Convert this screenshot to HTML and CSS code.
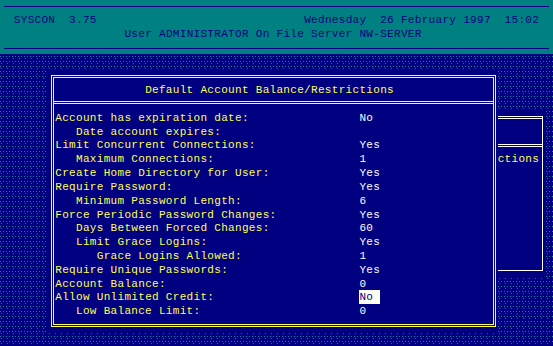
FILE: index.html
```
<!DOCTYPE html>
<html lang="en">
<head>
<meta charset="utf-8">
<title>SYSCON 3.75</title>
<link rel="stylesheet" href="styles.css">
</head>
<body>
<div class="screen">
  <header class="header">
    <div class="hrow"><div class="hrule hrule-top"></div></div>
    <div class="hrow hrow-split"><span class="t">SYSCON  3.75</span><span class="t">Wednesday  26 February 1997  15:02</span></div>
    <div class="hrow hrow-user"><span class="t">User ADMINISTRATOR On File Server NW-SERVER</span></div>
    <div class="hrow"><div class="hrule hrule-bottom"></div></div>
  </header>

  <div class="shade"></div>

  <div class="win">
    <div class="win-frame">
      <div class="win-title"></div>
      <div class="win-body">
        <div class="win-item t">Account Restrictions</div>
      </div>
    </div>
  </div>

  <section class="dialog">
    <div class="frame">
      <div class="title"><span class="t">Default Account Balance/Restrictions</span></div>
      <div class="body">
        <div class="row"><span class="label t">Account has expiration date:</span><span class="value t">No</span></div>
        <div class="row"><span class="label t i1">Date account expires:</span><span class="value t"></span></div>
        <div class="row"><span class="label t">Limit Concurrent Connections:</span><span class="value t">Yes</span></div>
        <div class="row"><span class="label t i1">Maximum Connections:</span><span class="value t">1</span></div>
        <div class="row"><span class="label t">Create Home Directory for User:</span><span class="value t">Yes</span></div>
        <div class="row"><span class="label t">Require Password:</span><span class="value t">Yes</span></div>
        <div class="row"><span class="label t i1">Minimum Password Length:</span><span class="value t">6</span></div>
        <div class="row"><span class="label t">Force Periodic Password Changes:</span><span class="value t">Yes</span></div>
        <div class="row"><span class="label t i1">Days Between Forced Changes:</span><span class="value t">60</span></div>
        <div class="row"><span class="label t i1">Limit Grace Logins:</span><span class="value t">Yes</span></div>
        <div class="row"><span class="label t i2">Grace Logins Allowed:</span><span class="value t">1</span></div>
        <div class="row"><span class="label t">Require Unique Passwords:</span><span class="value t">Yes</span></div>
        <div class="row"><span class="label t">Account Balance:</span><span class="value t">0</span></div>
        <div class="row"><span class="label t">Allow Unlimited Credit:</span><span class="value"><span class="cursor t">No</span></span></div>
        <div class="row"><span class="label t i1">Low Balance Limit:</span><span class="value t">0</span></div>
      </div>
    </div>
  </section>
</div>
</body>
</html>
```
FILE: styles.css
```
:root {
  --c: 6.9125px;
  --r: 13.84px;
  --navy: #000080;
  --teal: #008080;
  --yellow: #ffff55;
  --white: #ffffff;
}

html, body {
  margin: 0;
  padding: 0;
  background: var(--navy);
}

.screen {
  width: 553px;
  height: 346px;
  overflow: hidden;
  display: grid;
  grid-template-columns: repeat(80, 1fr);
  grid-template-rows: repeat(25, 1fr);
  font-family: "Liberation Mono", "DejaVu Sans Mono", monospace;
  font-size: 11px;
  letter-spacing: 0.3114px;
  line-height: var(--r);
  background: var(--navy);
}

.t {
  white-space: pre;
  display: block;
  box-sizing: border-box;
  height: var(--r);
  padding-top: 1px;
}

/* ---------- header ---------- */
.header {
  grid-column: 1 / -1;
  grid-row: 1 / 5;
  background: var(--teal);
  color: var(--navy);
  display: grid;
  grid-template-rows: repeat(4, 1fr);
  margin-bottom: 1px;
}

.hrow {
  display: flex;
  align-items: flex-start;
}

.hrule {
  flex: 1;
  height: 1px;
  margin: 0 4px;
  background: var(--navy);
}

.hrule-top { margin-top: 6px; }
.hrule-bottom { margin-top: 6.5px; }

.hrow-split {
  justify-content: space-between;
  padding: 0 calc(2 * var(--c));
}

.hrow-user {
  padding-left: calc(18 * var(--c));
}

/* ---------- shaded desktop ---------- */
.shade {
  grid-column: 1 / -1;
  grid-row: 5 / 26;
  background-color: var(--navy);
  background-image:
    conic-gradient(from 270deg at 1px 1px, #0a8a8a 90deg, transparent 0),
    conic-gradient(from 270deg at 1px 1px, #008078 90deg, transparent 0);
  background-size: 3px 5px, 6px 5px;
  background-position: 0 1px, 1px 3px;
}

/* ---------- background window ---------- */
.win {
  grid-column: 57 / 80;
  grid-row: 9 / 21;
  background: var(--navy);
  display: flex;
}

.win-frame {
  flex: 1;
  margin: 5.3px 3.1px 5.8px 3px;
  border-top: 3px double var(--white);
  border-right: 1px solid var(--white);
  border-bottom: 1px solid var(--white);
  border-left: 1px solid var(--white);
  display: flex;
  flex-direction: column;
}

.win-title {
  height: 25px;
  border-bottom: 3px double var(--white);
}

.win-body {
  display: flex;
  flex-direction: column;
  padding-top: 5.24px;
  padding-left: calc(var(--c) + 2.9px);
  color: var(--yellow);
}

/* ---------- dialog ---------- */
.dialog {
  grid-column: 8 / 73;
  grid-row: 6 / 25;
  background: var(--navy);
  display: flex;
}

.frame {
  flex: 1;
  margin: 5.8px 1.7px 5.16px 2.6px;
  border: 3px double var(--yellow);
  display: flex;
  flex-direction: column;
  color: var(--yellow);
}

.title {
  box-sizing: border-box;
  height: 26px;
  padding-top: 5.04px;
  padding-left: calc(13 * var(--c) + 1.3px);
  border-bottom: 3px double var(--yellow);
}

.body {
  padding-top: 6.72px;
  padding-left: 1.3px;
  display: flex;
  flex-direction: column;
}

.row {
  display: grid;
  grid-template-columns: calc(44 * var(--c)) 1fr;
  height: var(--r);
}

.label { color: var(--yellow); }
.i1 { padding-left: calc(3 * var(--c)); }
.i2 { padding-left: calc(6 * var(--c)); }

.value { color: var(--white); }

.cursor {
  width: calc(3 * var(--c));
  background: #fdfdf4;
  color: var(--navy);
}
```
